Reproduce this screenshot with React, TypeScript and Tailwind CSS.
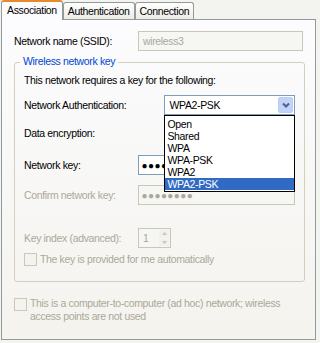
import React from 'react';

const options = ['Open', 'Shared', 'WPA', 'WPA-PSK', 'WPA2', 'WPA2-PSK'];

const Checkbox = () => (
  <span className="block w-[13px] h-[13px] border border-[#cac8bb] bg-[#f4f3ee] shrink-0" />
);

const Tab = ({ label, active }: { label: string; active?: boolean }) =>
  active ? (
    <div className="relative z-10 h-[20px] px-[5px] -mb-px border border-b-0 border-[#919b9c] border-t-[#e68b2c] border-t-2 rounded-t-[3px] bg-[#fcfcfe] flex items-start pt-[2px] text-black">
      {label}
    </div>
  ) : (
    <div className="h-[17px] px-[4px] border border-b-0 border-[#919b9c] rounded-t-[3px] bg-gradient-to-b from-white to-[#ecebe5] flex items-center text-black">
      {label}
    </div>
  );

export default function App() {
  return (
    <div className="w-[320px] h-[343px] bg-[#f3f3ef] text-[10.5px] tracking-[-0.35px] leading-[13px] text-black font-['Liberation_Sans',Arial,sans-serif] overflow-hidden">
      {/* Tabs */}
      <div className="flex items-end pl-[1px] h-[19px]">
        <Tab label="Association" active />
        <Tab label="Authentication" />
        <Tab label="Connection" />
      </div>

      {/* Panel */}
      <div className="ml-[1px] w-[315px] h-[321px] border border-[#919b9c] bg-gradient-to-b from-[#fcfcfe] to-[#f4f3ee] px-[12px] pt-[11px]">
        {/* SSID */}
        <div className="flex items-center h-[20px]">
          <span className="w-[124px]">Network name (SSID):</span>
          <div className="w-[165px] h-[20px] border border-[#c9c7ba] bg-[#f6f6f2] px-[4px] flex items-center text-[#a9a9a0]">
            wireless3
          </div>
        </div>

        {/* Group box */}
        <div className="relative mt-[11px] w-[291px] h-[220px] border border-[#d0d0bf] rounded-[3px] px-[9px] pt-[11px]">
          <span className="absolute -top-[8px] left-[5px] px-[3px] bg-[#fbfbfb] text-[#0046d5]">
            Wireless network key
          </span>

          <div>This network requires a key for the following:</div>

          <div className="flex items-center mt-[8px] h-[20px]">
            <span className="w-[141px]">Network Authentication:</span>
            <div className="relative w-[131px] h-[20px] border border-[#7f9db9] bg-white flex items-center pl-[4px]">
              WPA2-PSK
              <span className="absolute right-[1px] top-[1px] w-[15px] h-[16px] rounded-[2px] bg-[#c1d3fb] border border-[#b9cdf8] flex items-center justify-center">
                <svg width="8" height="6" viewBox="0 0 8 6">
                  <path d="M1 1.5 L4 4.5 L7 1.5" stroke="#4d6185" strokeWidth="2" fill="none" />
                </svg>
              </span>
              {/* open list */}
              <div className="absolute left-[-1px] top-[19px] z-20 w-[131px] border border-black bg-white pt-[2px] pb-[1px]">
                {options.map((o) => (
                  <div
                    key={o}
                    className={
                      o === 'WPA2-PSK'
                        ? 'h-[12px] leading-[12px] pl-[2px] bg-[#316ac5] text-white'
                        : 'h-[12px] leading-[12px] pl-[2px]'
                    }
                  >
                    {o}
                  </div>
                ))}
              </div>
            </div>
          </div>

          <div className="mt-[12px]">Data encryption:</div>

          <div className="flex items-center mt-[15px] h-[20px]">
            <span className="w-[114px]">Network key:</span>
            <div className="w-[158px] h-[20px] border border-[#7f9db9] bg-white flex items-center pl-[3px] text-[10px] tracking-[0.4px]">
              ●●●●●●●●
            </div>
          </div>

          <div className="flex items-center mt-[10px] h-[20px] text-[#aca899]">
            <span className="w-[114px]">Confirm network key:</span>
            <div className="w-[158px] h-[20px] border border-[#c9c7ba] bg-[#f6f6f2] flex items-center pl-[3px] text-[10px] tracking-[0.4px] text-[#aca899]">
              ●●●●●●●●
            </div>
          </div>

          <div className="flex items-center mt-[23px] h-[20px] text-[#aca899]">
            <span className="w-[114px]">Key index (advanced):</span>
            <div className="w-[33px] h-[20px] border border-[#c9c7ba] bg-[#f6f6f2] flex items-center pl-[4px] relative">
              1
              <div className="absolute right-[1px] top-[1px] w-[10px] h-[16px] flex flex-col gap-px">
                <span className="flex-1 bg-[#f1f0ea] rounded-[1px] flex items-center justify-center">
                  <svg width="5" height="3" viewBox="0 0 5 3"><path d="M0 3 L2.5 0 L5 3Z" fill="#c9c7ba" /></svg>
                </span>
                <span className="flex-1 bg-[#f1f0ea] rounded-[1px] flex items-center justify-center">
                  <svg width="5" height="3" viewBox="0 0 5 3"><path d="M0 0 L2.5 3 L5 0Z" fill="#c9c7ba" /></svg>
                </span>
              </div>
            </div>
          </div>

          <div className="flex items-center gap-[3px] mt-[5px] text-[#aca899]">
            <Checkbox />
            <span>The key is provided for me automatically</span>
          </div>
        </div>

        {/* Ad hoc */}
        <div className="flex gap-[3px] mt-[15px] text-[#aca899] whitespace-nowrap">
          <div className="pt-px"><Checkbox /></div>
          <span>
            This is a computer-to-computer (ad hoc) network; wireless
            <br />
            access points are not used
          </span>
        </div>
      </div>
    </div>
  );
}
